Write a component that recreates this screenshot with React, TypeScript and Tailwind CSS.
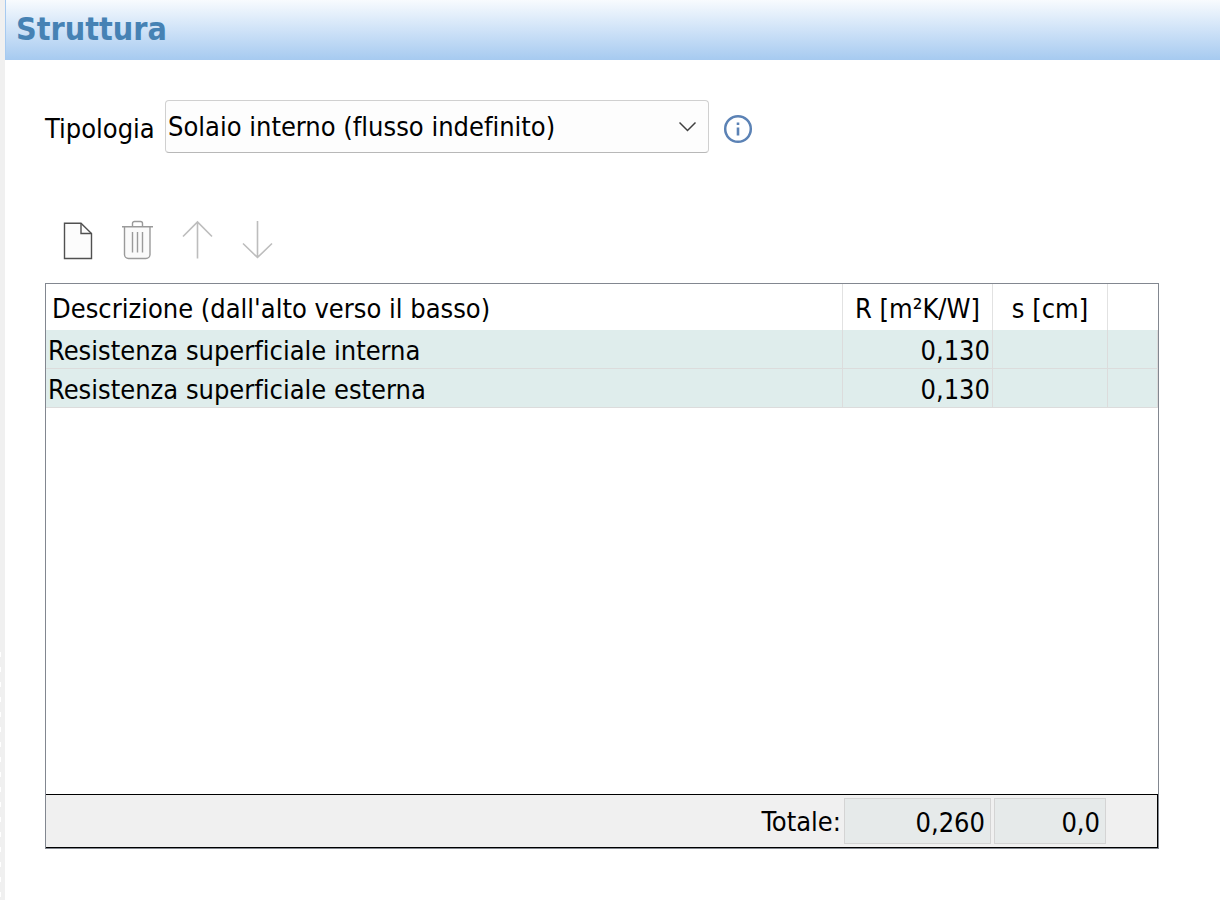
import React, { useState } from 'react'

const layers = [
  { id: 1, description: 'Resistenza superficiale interna', r: '0,130', s: '' },
  { id: 2, description: 'Resistenza superficiale esterna', r: '0,130', s: '' },
]

const types = [
  'Solaio interno (flusso indefinito)',
  'Solaio interno (flusso ascendente)',
  'Solaio interno (flusso discendente)',
]

const NewIcon = () => (
  <svg width="40" height="40" viewBox="0 0 40 40" fill="none" stroke="#505050" strokeWidth="1.4">
    <path d="M6.5 3.2H23L33.5 13.5V38.5H6.5Z" fill="#fcfcfc" />
    <path d="M23 3.2V13.5H33.5" />
  </svg>
)

const DeleteIcon = () => (
  <svg width="40" height="40" viewBox="0 0 40 40" fill="none" stroke="#9a9a9a" strokeWidth="1.4">
    <path d="M6.5 7V34.5A4 4 0 0 0 10.5 38.5H28A4 4 0 0 0 32 34.5V7" fill="#fafafa" />
    <path d="M4 6.8H35M14.5 6.8V3.5A2 2 0 0 1 16.5 1.5H22.5A2 2 0 0 1 24.5 3.5V6.8" />
    <path d="M14.5 12V32.5M19.5 12V32.5M24.5 12V32.5" />
  </svg>
)

const UpIcon = () => (
  <svg width="40" height="40" viewBox="0 0 40 40" fill="none" stroke="#bdbdbd" strokeWidth="1.6">
    <path d="M19.5 38.5V2M5 16.5L19.5 2L34 16.5" />
  </svg>
)

const DownIcon = () => (
  <svg width="40" height="40" viewBox="0 0 40 40" fill="none" stroke="#bdbdbd" strokeWidth="1.6">
    <path d="M19.5 1V37.5M5 23.5L19.5 37.5L34 23.5" />
  </svg>
)

const tools = [
  { label: 'Nuovo', icon: <NewIcon />, disabled: false },
  { label: 'Elimina', icon: <DeleteIcon />, disabled: true },
  { label: 'Sposta su', icon: <UpIcon />, disabled: true },
  { label: 'Sposta giù', icon: <DownIcon />, disabled: true },
]

const App: React.FC = () => {
  const [type, setType] = useState(types[0])

  return (
    <div className="flex min-h-screen bg-white font-['DejaVu_Sans_Condensed','DejaVu_Sans',sans-serif] text-[27px] leading-8 text-black [font-variant-ligatures:none]">
      <div className="flex w-[5px] shrink-0 items-end bg-[#f0f0f0]">
        <div className="h-[248px] w-px bg-[repeating-linear-gradient(to_bottom,#fff_0px,#fff_5px,transparent_5px,transparent_15px)]" />
      </div>
      <div className="flex min-w-0 flex-1 flex-col">
        <header className="flex h-[60px] items-center border-l border-[#a6caf0] bg-linear-to-b from-[#f8fbfe] to-[#a6caf0] px-[10px]">
          <h1 className="pb-[2px] text-[32px] font-bold text-[#4682b4]">Struttura</h1>
        </header>

        <main className="flex flex-1 flex-col pt-10 pr-[61px] pb-[51px] pl-10">
          <div className="flex items-center">
            <label htmlFor="type" className="w-[120px] pt-1">
              Tipologia
            </label>
            <div className="relative w-[544px]">
              <select
                id="type"
                value={type}
                onChange={(e) => setType(e.target.value)}
                className="h-[53px] w-full appearance-none rounded border border-[#d0d0d0] border-b-[#b8b8b8] bg-[#fdfdfd] pr-10 pl-[2px] [font-variant-ligatures:none]"
              >
                {types.map((t) => (
                  <option key={t}>{t}</option>
                ))}
              </select>
              <svg
                className="pointer-events-none absolute top-[21px] right-3"
                width="18"
                height="12"
                viewBox="0 0 18 12"
                fill="none"
                stroke="#404040"
                strokeWidth="1.5"
              >
                <path d="M0.5 1.5L8.500 9.500L16.500 1.500" />
              </svg>
            </div>
            <button type="button" aria-label="Informazioni" className="ml-[14px] pt-1">
              <svg width="30" height="30" viewBox="0 0 30 30" fill="none" stroke="#5b82b5">
                <circle cx="15" cy="15" r="12.8" strokeWidth="2.5" />
                <path d="M15 13.5V21.5M15 8.5V11" strokeWidth="2.6" />
              </svg>
            </button>
          </div>

          <div className="mt-[67px] flex gap-5 pl-[13px]">
            {tools.map((tool) => (
              <button key={tool.label} type="button" aria-label={tool.label} disabled={tool.disabled}>
                {tool.icon}
              </button>
            ))}
          </div>

          <div className="mt-[23px] flex flex-1 flex-col border border-[#828790]">
            <div className="flex-1">
              <table className="w-full table-fixed border-separate border-spacing-0">
                <colgroup>
                  <col />
                  <col className="w-[150px]" />
                  <col className="w-[115px]" />
                  <col className="w-[50px]" />
                </colgroup>
                <thead>
                  <tr className="h-[46px] whitespace-nowrap">
                    <th className="border-r border-[#e2e2e2] pt-1 pl-[6px] text-left font-normal">
                      Descrizione (dall'alto verso il basso)
                    </th>
                    <th className="border-r border-[#e2e2e2] pt-1 text-center font-normal">R [m²K/W]</th>
                    <th className="border-r border-[#e2e2e2] pt-1 text-center font-normal">s [cm]</th>
                    <th />
                  </tr>
                </thead>
                <tbody>
                  {layers.map((layer) => (
                    <tr key={layer.id} className="h-[39px] bg-[#dfedec]">
                      <td className="border-r border-b border-[#dcdcdc] pt-1 pl-[2px]">{layer.description}</td>
                      <td className="border-r border-b border-[#dcdcdc] pt-1 pr-[2px] text-right">{layer.r}</td>
                      <td className="border-r border-b border-[#dcdcdc] pt-1 pr-[2px] text-right">{layer.s}</td>
                      <td className="border-r border-b border-[#dcdcdc]" />
                    </tr>
                  ))}
                </tbody>
              </table>
            </div>

            <div className="flex items-center gap-[3px] border-y border-r border-black bg-[#f0f0f0] py-[3px] pr-[51px]">
              <label htmlFor="total-r" className="ml-auto pt-[2px]">
                Totale:
              </label>
              <input
                id="total-r"
                readOnly
                value="0,260"
                className="h-[46px] w-[147px] border border-[#d4d4d4] bg-[#e6eaea] pt-[2px] pr-[5px] text-right"
              />
              <input
                readOnly
                aria-label="Totale s [cm]"
                value="0,0"
                className="h-[46px] w-[112px] border border-[#d4d4d4] bg-[#e6eaea] pt-[2px] pr-[5px] text-right"
              />
            </div>
          </div>
        </main>
      </div>
    </div>
  )
}

export default App
